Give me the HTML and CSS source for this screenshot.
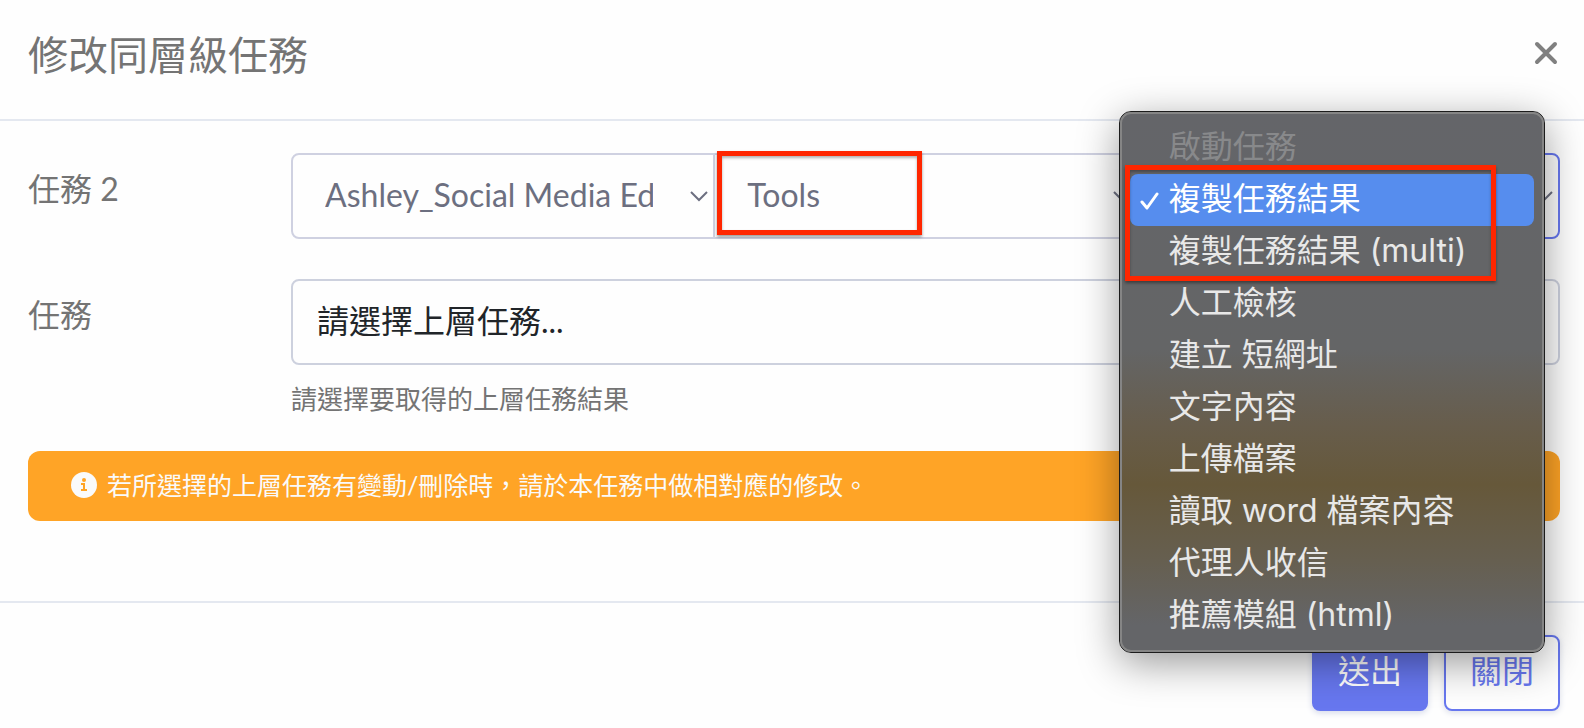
FILE: index.html
```
<!DOCTYPE html>
<html lang="zh-Hant">
<head>
  <meta charset="utf-8">
  <title>修改同層級任務</title>
  <link rel="stylesheet" href="styles.css">
</head>
<body>
  <div class="modal">
    <div class="modal-header">
      <h1>修改同層級任務</h1>
      <button type="button" class="close-button" aria-label="Close">
        <svg width="24" height="24" viewBox="0 0 24 24"><path d="M3 3L21 21M21 3L3 21"/></svg>
      </button>
    </div>

    <form class="modal-body">
      <div class="form-row">
        <label for="agentSelect">任務 2</label>
        <div class="select-group">
          <div class="select-wrap">
            <select id="agentSelect">
              <option>Ashley_Social Media Editor</option>
            </select>
            <svg class="chevron" width="20" height="12" viewBox="0 0 20 12"><path d="M2 2L10 10L18 2"/></svg>
          </div>
          <div class="select-wrap">
            <select aria-label="類別">
              <option>Tools</option>
            </select>
            <svg class="chevron" width="20" height="12" viewBox="0 0 20 12"><path d="M2 2L10 10L18 2"/></svg>
            <div class="marker marker-tools"></div>
          </div>
          <div class="select-wrap">
            <select class="focused" aria-label="啟動任務">
              <option></option>
            </select>
            <svg class="chevron" width="20" height="12" viewBox="0 0 20 12"><path d="M2 2L10 10L18 2"/></svg>

            <div class="menu">
              <ul role="listbox" aria-label="啟動任務">
                <li role="option" aria-disabled="true" class="disabled">啟動任務</li>
                <li role="option" aria-selected="true" class="selected">
                  <svg class="check" width="20" height="20" viewBox="0 0 20 20"><path d="M2 11L7 17L17 3"/></svg>複製任務結果
                </li>
                <li role="option">複製任務結果 (multi)</li>
                <li role="option">人工檢核</li>
                <li role="option">建立 短網址</li>
                <li role="option">文字內容</li>
                <li role="option">上傳檔案</li>
                <li role="option">讀取 word 檔案內容</li>
                <li role="option">代理人收信</li>
                <li role="option">推薦模組 (html)</li>
              </ul>
              <div class="marker marker-menu"></div>
            </div>
          </div>
        </div>
      </div>

      <div class="form-row">
        <label for="parentSelect">任務</label>
        <div>
          <select id="parentSelect" class="parent-select">
            <option>請選擇上層任務...</option>
          </select>
          <div class="help-text">請選擇要取得的上層任務結果</div>
        </div>
      </div>

      <div class="alert">
        <svg width="26" height="26" viewBox="0 0 26 26">
          <circle cx="13" cy="13" r="13" fill="#fafafa"/>
          <circle cx="13" cy="8" r="2" fill="#ffa426"/>
          <path d="M10 11H14V17H16V19H10V17H12V13H10Z" fill="#ffa426"/>
        </svg>
        <span>若所選擇的上層任務有變動/刪除時，請於本任務中做相對應的修改。</span>
      </div>
    </form>

    <div class="modal-footer">
      <button type="submit" class="btn btn-primary">送出</button>
      <button type="button" class="btn btn-outline">關閉</button>
    </div>
  </div>
</body>
</html>
```
FILE: styles.css
```
* {
  box-sizing: border-box;
}

body {
  margin: 0;
  background-color: #fefefe;
  color: #747474;
  font-family: Lato, "Noto Sans CJK TC", sans-serif;
  font-size: 32px;
}

.modal-header {
  display: flex;
  align-items: center;
  justify-content: space-between;
  padding: 24px 26px 32px 28px;
  border-bottom: 2px solid #e4e8f0;
}

h1 {
  margin: 0;
  font-size: 40px;
  font-weight: normal;
  line-height: 63px;
}

.close-button {
  display: flex;
  padding: 0 0 6px;
  border: none;
  background: none;
  cursor: pointer;
}

.close-button path {
  fill: none;
  stroke: #808080;
  stroke-width: 4;
  stroke-linecap: round;
}

.modal-body {
  padding: 32px 24px 80px 28px;
}

.form-row {
  display: grid;
  grid-template-columns: 263px 1fr;
  margin-bottom: 40px;
}

.form-row label {
  padding-top: 12px;
  line-height: 48px;
}

.select-group {
  display: flex;
}

.select-wrap {
  position: relative;
  flex: 1 1 0;
  min-width: 0;
}

.select-wrap + .select-wrap {
  margin-left: -2px;
}

select {
  display: block;
  width: 100%;
  height: 86px;
  margin: 0;
  padding: 0 60px 4px 32px;
  border: 2px solid #cfd1e1;
  background-color: #fefefe;
  color: #6c6f80;
  font: inherit;
  appearance: none;
  outline: none;
}

.select-wrap:first-child select {
  border-radius: 8px 0 0 8px;
}

.select-wrap:last-child select {
  border-radius: 0 8px 8px 0;
}

select.focused {
  border-color: #6777ef;
}

.parent-select {
  padding-left: 24px;
  border-color: #cdd1de;
  border-radius: 8px;
  color: #212529;
}

.chevron {
  position: absolute;
  top: 37px;
  right: 6px;
  fill: none;
  stroke: #6c6f80;
  stroke-width: 2;
  pointer-events: none;
}

.help-text {
  margin-top: 14px;
  font-size: 26px;
  line-height: 40px;
}

.form-row + .form-row {
  margin-bottom: 32px;
}

.alert {
  display: flex;
  align-items: center;
  gap: 10px;
  padding: 14px 43px 16px;
  border-radius: 12px;
  background-color: #ffa426;
  color: #fafafa;
  font-size: 25px;
  line-height: 40px;
}

.modal-footer {
  display: flex;
  justify-content: flex-end;
  gap: 16px;
  padding: 32px 24px 16px;
  border-top: 2px solid #e4e8f0;
}

.btn {
  padding: 0 24px 4px;
  border: 2px solid #6777ef;
  border-radius: 8px;
  font: inherit;
  line-height: 68px;
  cursor: pointer;
}

.btn-primary {
  background-color: #6777ef;
  color: #fff;
  box-shadow: 0 2px 6px #d4d9ea;
}

.btn-outline {
  background-color: #fefefe;
  color: #6777ef;
  box-shadow: 0 2px 6px #dcdfea;
}

/* Open menu */
.menu {
  position: absolute;
  z-index: 1;
  top: -42px;
  left: -17px;
  width: 426px;
  border: 1px solid #1c1c1c;
  border-radius: 12px;
  background: linear-gradient(#646569 0%, #646566 44%, #675d4c 58%, #66583a 69%, #665f50 83%, #646568 95%);
  box-shadow: 0 10px 40px rgba(0, 0, 0, 0.4);
  font-family: Inter, "Noto Sans CJK TC", sans-serif;
}

.menu ul {
  margin: 0;
  padding: 8px;
  border: 2px solid #858585;
  border-radius: 11px;
  list-style: none;
}

.menu li {
  position: relative;
  padding: 0 0 2px 39px;
  color: #e8e8e8;
  line-height: 50px;
  white-space: nowrap;
}

.menu .disabled {
  color: #88898b;
}

.menu .selected {
  border-radius: 8px;
  background-color: #568dee;
  color: #fff;
}

.check {
  position: absolute;
  top: 17px;
  left: 10px;
  fill: none;
  stroke: #fff;
  stroke-width: 3;
  stroke-linecap: round;
  stroke-linejoin: round;
}

/* Red highlight boxes */
.marker {
  position: absolute;
  border: 5px solid #ff2600;
  box-shadow: 0 2px 3px rgba(0, 0, 0, 0.4), inset 0 2px 3px rgba(0, 0, 0, 0.3);
  pointer-events: none;
}

.marker-tools {
  top: -2px;
  left: 4px;
  width: 205px;
  height: 84px;
}

.marker-menu {
  top: 53px;
  left: 5px;
  width: 371px;
  height: 116px;
}
```
